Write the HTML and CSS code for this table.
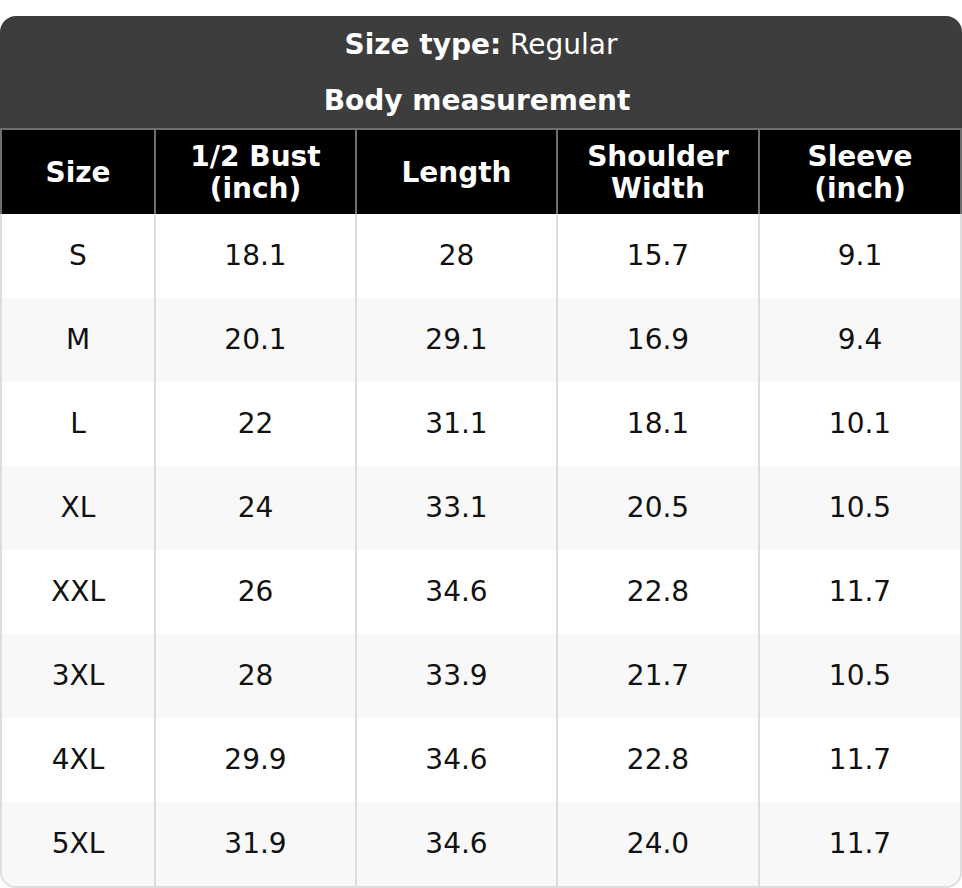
FILE: index.html
```html
<!DOCTYPE html>
<html>
<head>
<meta charset="utf-8">
<link rel="stylesheet" href="styles.css">
</head>
<body>
<div class="chart">
  <div class="title">
    <div class="title-line"><b>Size type:</b> Regular</div>
    <div class="title-line shift"><b>Body measurement</b></div>
  </div>
  <div class="grid head">
    <div class="cell">Size</div>
    <div class="cell">1/2 Bust<br>(inch)</div>
    <div class="cell">Length</div>
    <div class="cell">Shoulder<br>Width</div>
    <div class="cell">Sleeve<br>(inch)</div>
  </div>
  <div class="body">
    <div class="grid row"><div class="cell">S</div><div class="cell">18.1</div><div class="cell">28</div><div class="cell">15.7</div><div class="cell">9.1</div></div>
    <div class="grid row alt"><div class="cell">M</div><div class="cell">20.1</div><div class="cell">29.1</div><div class="cell">16.9</div><div class="cell">9.4</div></div>
    <div class="grid row"><div class="cell">L</div><div class="cell">22</div><div class="cell">31.1</div><div class="cell">18.1</div><div class="cell">10.1</div></div>
    <div class="grid row alt"><div class="cell">XL</div><div class="cell">24</div><div class="cell">33.1</div><div class="cell">20.5</div><div class="cell">10.5</div></div>
    <div class="grid row"><div class="cell">XXL</div><div class="cell">26</div><div class="cell">34.6</div><div class="cell">22.8</div><div class="cell">11.7</div></div>
    <div class="grid row alt"><div class="cell">3XL</div><div class="cell">28</div><div class="cell">33.9</div><div class="cell">21.7</div><div class="cell">10.5</div></div>
    <div class="grid row"><div class="cell">4XL</div><div class="cell">29.9</div><div class="cell">34.6</div><div class="cell">22.8</div><div class="cell">11.7</div></div>
    <div class="grid row alt"><div class="cell">5XL</div><div class="cell">31.9</div><div class="cell">34.6</div><div class="cell">24.0</div><div class="cell">11.7</div></div>
  </div>
</div>
</body>
</html>
```
FILE: styles.css
```css
html, body {
  margin: 0;
  padding: 0;
  background: #ffffff;
}
body {
  padding-top: 16px;
  font-family: "DejaVu Sans", sans-serif;
  font-size: 28px;
  color: #111111;
}
.chart {
  width: 962px;
}
.title {
  background: #3d3d3d;
  color: #ffffff;
  border-radius: 16px 16px 0 0;
  border-bottom: 2px solid #6e6e6e;
  text-align: center;
}
.title-line {
  height: 56px;
  display: flex;
  align-items: center;
  justify-content: center;
  white-space: pre;
}
.title-line.shift {
  padding-right: 8px;
}
.grid {
  display: grid;
  grid-template-columns: 152px 201px 201px 202px 202px;
}
.cell {
  display: flex;
  align-items: center;
  justify-content: center;
  text-align: center;
  line-height: 32px;
}
.cell + .cell {
  border-left: 2px solid #dddddd;
}
.head {
  background: #000000;
  color: #ffffff;
  font-weight: bold;
  height: 84px;
  border-left: 2px solid #6e6e6e;
  border-right: 2px solid #6e6e6e;
}
.head .cell {
  padding-top: 2px;
}
.head .cell + .cell {
  border-left-color: #6e6e6e;
}
.body {
  border: 2px solid #dddddd;
  border-top: none;
  border-radius: 0 0 16px 16px;
  overflow: hidden;
}
.row {
  height: 84px;
  background: #ffffff;
}
.row.alt {
  background: #f8f8f8;
}
```
